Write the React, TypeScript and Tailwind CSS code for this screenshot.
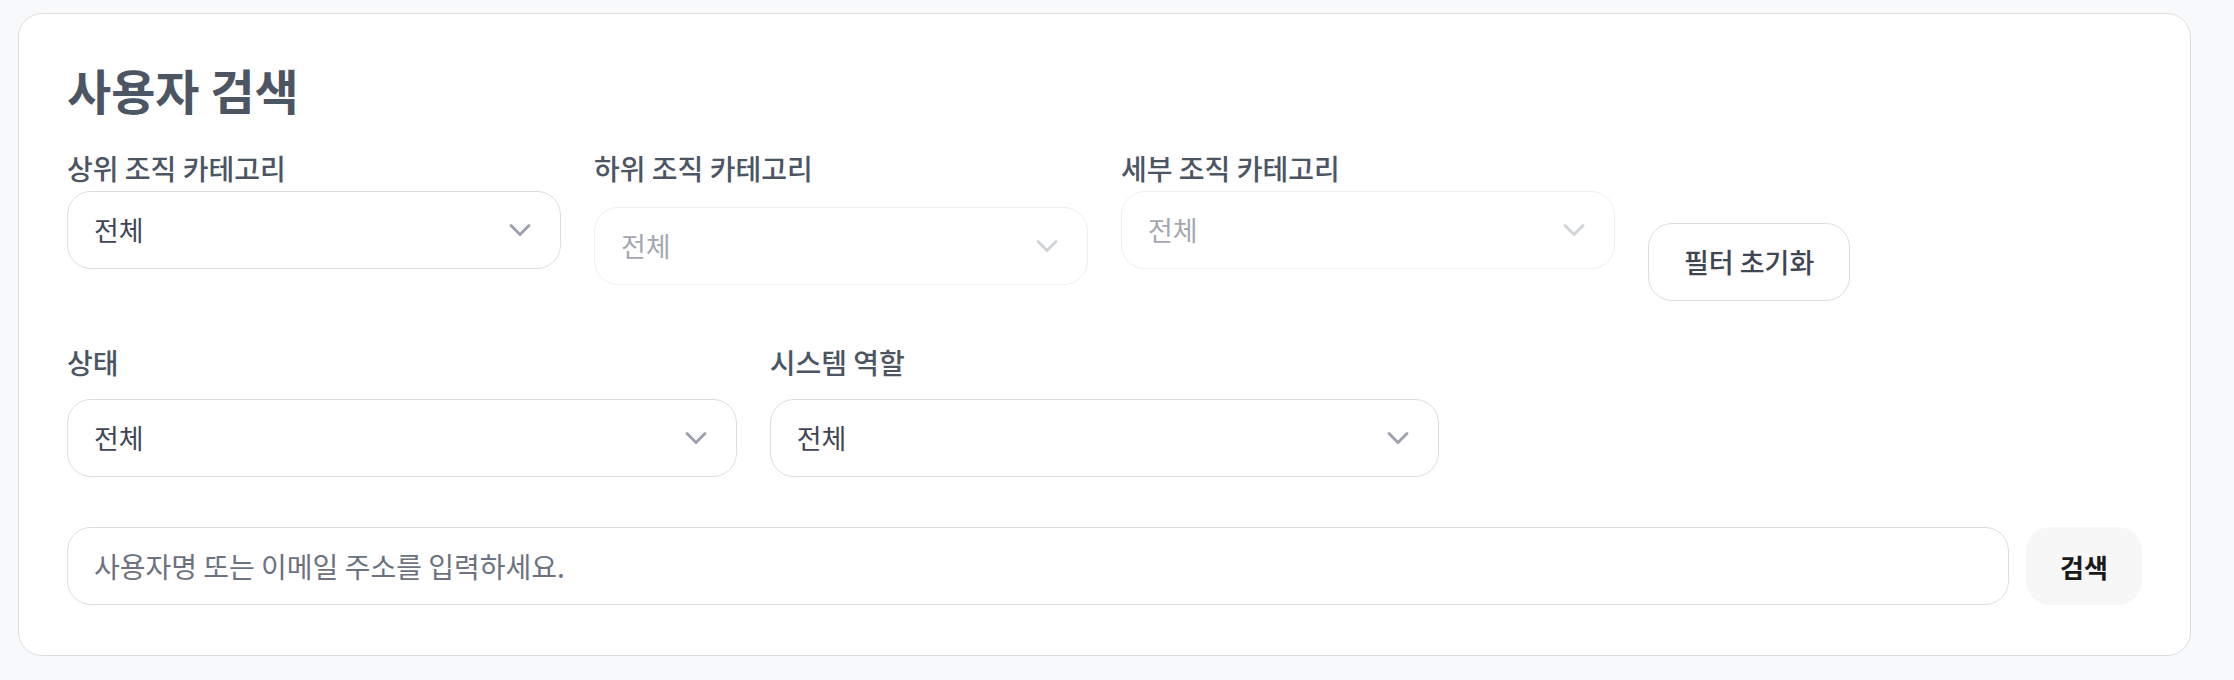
import { ChevronDown } from "lucide-react";

function SelectBox({ label, disabled = false, extraTop = false }: { label?: string; disabled?: boolean; extraTop?: boolean }) {
  return (
    <div
      className={`flex h-[78px] items-center justify-between rounded-[24px] border bg-white pl-[26px] pr-[22px] ${
        disabled ? "border-[#eeeeee]" : "border-[#dedede]"
      } ${extraTop ? "mt-[17px]" : "mt-px"}`}
    >
      <span className={`text-[27px] ${disabled ? "text-[#a3a8b0]" : "text-[#3f4653]"}`}>
        {label ?? "전체"}
      </span>
      <ChevronDown
        size={36}
        strokeWidth={2}
        className={disabled ? "text-[#d1d5db]" : "text-[#9ca3af]"}
      />
    </div>
  );
}

export default function App() {
  return (
    <div className="min-h-[680px] bg-[#f8f9fa] pl-[18px] pr-[43px] pt-[13px] font-['Noto_Sans_CJK_KR','Noto_Sans',sans-serif]">
      <div className="rounded-[24px] border border-[#dedede] bg-white px-12 pt-12 pb-[50px]">

        {/* 제목 */}
        <h2 className="text-[48px] font-bold leading-[54px] text-[#4b5563]">
          사용자 검색
        </h2>

        {/* 조직 필터 */}
        <div className="mt-[30px] flex items-start gap-[33px]">
          <div className="w-[494px]">
            <p className="text-[28px] font-medium leading-[44px] text-[#4b5563]">상위 조직 카테고리</p>
            <SelectBox />
          </div>

          <div className="w-[494px]">
            <p className="text-[28px] font-medium leading-[44px] text-[#4b5563]">하위 조직 카테고리</p>
            <SelectBox disabled extraTop />
          </div>

          <div className="w-[494px]">
            <p className="text-[28px] font-medium leading-[44px] text-[#4b5563]">세부 조직 카테고리</p>
            <SelectBox disabled />
          </div>

          <button className="mt-[77px] h-[78px] rounded-[24px] border border-[#dedede] bg-white px-[35px] text-[27px] font-medium text-[#3f4653]">
            필터 초기화
          </button>
        </div>

        {/* 상태 / 역할 */}
        <div className="mt-[39px] grid grid-cols-3 gap-x-[33px]">
          <div>
            <p className="mb-[15px] text-[28px] font-medium leading-[44px] text-[#4b5563]">상태</p>
            <SelectBox />
          </div>
          <div>
            <p className="mb-[15px] text-[28px] font-medium leading-[44px] text-[#4b5563]">시스템 역할</p>
            <SelectBox />
          </div>
        </div>

        {/* 검색 */}
        <div className="mt-[50px] flex gap-[17px]">
          <input
            type="text"
            placeholder="사용자명 또는 이메일 주소를 입력하세요."
            className="h-[78px] flex-1 rounded-[24px] border border-[#dedede] bg-white px-[26px] text-[28px] text-[#3f4653] outline-none placeholder:text-[#6b7280]"
          />
          <button className="h-[78px] w-[116px] rounded-[24px] bg-[#f7f7f7] text-[26px] font-semibold text-[#1a1a1a]">
            검색
          </button>
        </div>

      </div>
    </div>
  );
}
